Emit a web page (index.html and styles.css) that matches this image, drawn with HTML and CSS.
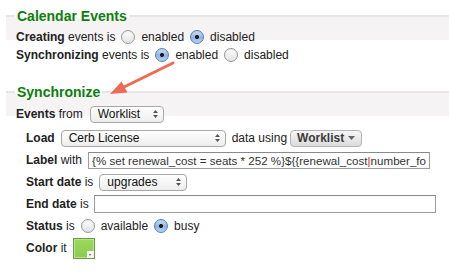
FILE: index.html
```html
<!DOCTYPE html>
<html>
<head>
    <title>Calendar Events</title>
    <link rel="stylesheet" href="styles.css">
</head>
<body>

<div class="page">
    <fieldset class="group">
        <legend>Calendar Events</legend>
        <div class="row">
            <span><b>Creating</b> events is</span>
            <label class="opt"><input type="radio" name="create"> enabled</label>
            <label class="opt"><input type="radio" name="create" checked> disabled</label>
        </div>
        <div class="row">
            <span><b>Synchronizing</b> events is</span>
            <label class="opt"><input type="radio" name="sync" checked> enabled</label>
            <label class="opt"><input type="radio" name="sync"> disabled</label>
        </div>
    </fieldset>

    <fieldset class="group sync">
        <legend>Synchronize</legend>
        <div class="row tall first">
            <span><b>Events</b> from</span>
            <div class="select w-events">Worklist <svg class="updown" width="5" height="8" viewBox="0 0 5 8"><path d="M2.5 0 L5 3 L0 3 Z M0 5 L5 5 L2.5 8 Z" fill="#555"/></svg></div>
        </div>

        <div class="sub">
            <div class="row tall">
                <b>Load</b>
                <div class="select w-load">Cerb License <svg class="updown" width="5" height="8" viewBox="0 0 5 8"><path d="M2.5 0 L5 3 L0 3 Z M0 5 L5 5 L2.5 8 Z" fill="#555"/></svg></div>
                <span class="tight">data using</span>
                <div class="menu-btn">Worklist <svg width="7" height="4" viewBox="0 0 7 4"><path d="M0 0 L7 0 L3.5 4 Z" fill="#666"/></svg></div>
            </div>
            <div class="row tall">
                <span><b>Label</b> with</span>
                <div class="textbox label-box">{% set renewal_cost = seats * 252 %}${{renewal_cost<span class="caret">|</span>number_fo</div>
            </div>
            <div class="row tall">
                <span><b>Start date</b> is</span>
                <div class="select w-start">upgrades <svg class="updown" width="5" height="8" viewBox="0 0 5 8"><path d="M2.5 0 L5 3 L0 3 Z M0 5 L5 5 L2.5 8 Z" fill="#555"/></svg></div>
            </div>
            <div class="row tall">
                <span><b>End date</b> is</span>
                <input type="text" class="textbox end-box">
            </div>
            <div class="row tall">
                <span><b>Status</b> is</span>
                <label class="opt"><input type="radio" name="status"> available</label>
                <label class="opt"><input type="radio" name="status" checked> busy</label>
            </div>
            <div class="row tall">
                <span><b>Color</b> it</span>
                <span class="swatch"><span class="swatch-tab"></span></span>
            </div>
        </div>
    </fieldset>

    <svg class="pointer" width="449" height="271" viewBox="0 0 449 271">
        <line x1="173" y1="63" x2="122" y2="88" stroke="#ef6a52" stroke-width="3" stroke-linecap="round"/>
        <path d="M110 94 L121.5 81.5 L127.5 92.5 Z" fill="#ef6a52"/>
    </svg>
</div>

</body>
</html>
```

FILE: styles.css
```css
:root {
    --legend-color: #0d7f0d;
    --text-color: #222;
    --rule-color: #e6e6e6;
    --band-color: #f6f3f4;
}

body {
    margin: 0;
    background: #fff;
    color: var(--text-color);
    font-family: 'Liberation Sans', Arial, sans-serif;
    font-size: 12px;
}

.page {
    position: relative;
    padding-top: 8px;
    height: 263px;
    overflow: hidden;
}

.group {
    margin: 0 0 20px 6px;
    padding: 4px 0 0 10px;
    border: none;
    border-top: 2px solid var(--rule-color);
    background: linear-gradient(var(--band-color), var(--band-color) 23px, #fff 23px);
}

.group legend {
    margin-left: -1px;
    padding: 0 2px;
    color: var(--legend-color);
    font-size: 14px;
    font-weight: bold;
    line-height: 16px;
}

.group.sync {
    padding-top: 3px;
}

.row {
    display: flex;
    align-items: center;
    gap: 6px;
    height: 18px;
    white-space: nowrap;
}

.row.tall {
    height: 22px;
}

.row.first {
    margin-bottom: 2px;
}

.sub {
    margin-left: 10px;
}

.opt {
    display: flex;
    align-items: center;
    gap: 6px;
}

/* aqua style radio */
input[type=radio] {
    appearance: none;
    -webkit-appearance: none;
    margin: 0;
    width: 14px;
    height: 14px;
    border-radius: 50%;
    border: 1px solid #9a9a9a;
    background: linear-gradient(#fdfdfd, #e2e2e2);
    box-shadow: inset 0 1px 1px rgba(0, 0, 0, 0.08);
}

input[type=radio]:checked {
    border-color: #5a7fae;
    background:
        radial-gradient(circle, #1c1c1c 0, #1c1c1c 1.6px, transparent 2.4px),
        linear-gradient(#cfe1f6, #8fb5e4 55%, #b6d2f3);
}

.select {
    display: flex;
    align-items: center;
    justify-content: space-between;
    box-sizing: border-box;
    height: 17px;
    padding: 0 5px 0 7px;
    border: 1px solid #a8a8a8;
    border-radius: 4px;
    background: linear-gradient(#ffffff, #ededed);
    color: #111;
}

.w-events { width: 74px; margin-left: 1px; }
.w-load { width: 165px; }
.w-start { width: 88px; }

.tight {
    margin-right: -3px;
}

.menu-btn {
    display: flex;
    align-items: center;
    gap: 4px;
    box-sizing: border-box;
    height: 17px;
    padding: 0 6px;
    border: 1px solid #b4b4b4;
    border-radius: 4px;
    background: linear-gradient(#f6f6f6, #dcdcdc);
    color: #3c3c3c;
    font-weight: bold;
}

.textbox {
    box-sizing: border-box;
    width: 342px;
    border: 1px solid #9c9c9c;
    border-top-color: #8a8a8a;
    background: #fff;
    font-family: 'Liberation Sans', Arial, sans-serif;
}

.label-box {
    height: 17px;
    padding: 0 3px;
    overflow: hidden;
    font-size: 11.6px;
    line-height: 15px;
    color: #333;
}

.caret {
    color: #d11a1a;
}

.end-box {
    height: 18px;
    margin: 0 0 0 -1px;
    padding: 0;
    outline: none;
}

.swatch {
    position: relative;
    box-sizing: border-box;
    width: 22px;
    height: 21px;
    border: 1px solid #6f9a3c;
    background: linear-gradient(#9ad85e, #8ccb50);
    box-shadow: inset 0 0 0 1px #b9e392;
}

.swatch-tab {
    position: absolute;
    right: 0;
    bottom: 0;
    width: 7px;
    height: 7px;
    background: #f4f4f4;
}

.swatch-tab::after {
    content: "";
    position: absolute;
    left: 2px;
    top: 3px;
    border-left: 1.5px solid transparent;
    border-right: 1.5px solid transparent;
    border-top: 2px solid #555;
}

.pointer {
    position: absolute;
    left: 0;
    top: 0;
    pointer-events: none;
}
```
